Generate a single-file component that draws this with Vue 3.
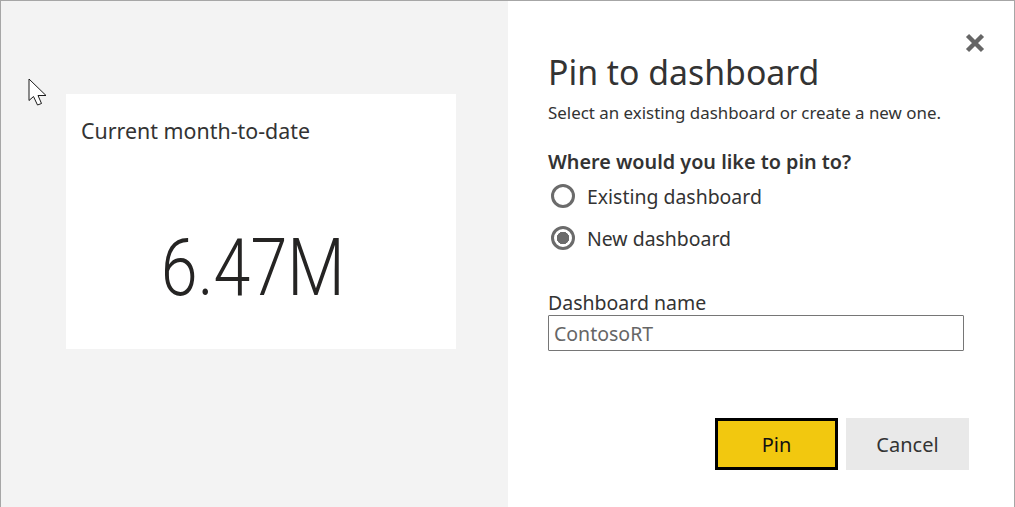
<script setup>
const title = 'Pin to dashboard'
</script>

<template>
  <div class="dialog">
    <section class="preview">
      <svg class="cursor" width="20" height="30" viewBox="0 0 20 30">
        <path d="M1 1 L1 22.5 L5.5 18.5 L9.5 27 L13.5 25.5 L10 17.5 L18 17.5 Z" fill="#fff" stroke="#1a1a1a" stroke-width="1" stroke-linejoin="miter" />
      </svg>
      <div class="card">
        <div class="card-title">Current month-to-date</div>
        <div class="card-value"><span class="value-text">6.47M</span></div>
      </div>
    </section>
    <section class="panel">
      <div class="close-row">
        <svg class="close" width="20" height="20" viewBox="0 0 20 20">
          <path d="M2.5 2.5 L17.5 17.5 M17.5 2.5 L2.5 17.5" stroke="#666" stroke-width="4.4" fill="none" />
        </svg>
      </div>
      <h1>{{ title }}</h1>
      <p class="sub">Select an existing dashboard or create a new one.</p>
      <h2>Where would you like to pin to?</h2>
      <div class="radio-row">
        <span class="radio"></span>
        <span>Existing dashboard</span>
      </div>
      <div class="radio-row second">
        <span class="radio on"></span>
        <span>New dashboard</span>
      </div>
      <label class="name-label">Dashboard name</label>
      <div class="input">ContosoRT</div>
      <div class="actions">
        <button class="btn primary">Pin</button>
        <button class="btn">Cancel</button>
      </div>
    </section>
  </div>
</template>

<style>
html, body { margin: 0; background: #fff; }
</style>

<style scoped>
.dialog {
  box-sizing: border-box;
  width: 1015px;
  height: 507px;
  display: flex;
  border-top: 1px solid #a6a6a6;
  border-left: 1px solid #a6a6a6;
  border-right: 1px solid #a6a6a6;
  font-family: "Noto Sans", "Open Sans", sans-serif;
  color: #333;
  overflow: hidden;
}
.preview {
  position: relative;
  box-sizing: border-box;
  width: 507px;
  background: #f3f3f3;
  padding: 93px 0 0 65px;
}
.cursor {
  position: absolute;
  left: 27px;
  top: 77px;
}
.card {
  box-sizing: border-box;
  width: 390px;
  height: 255px;
  background: #fff;
  padding: 22px 15px 0;
}
.card-title {
  font-size: 21.4px;
  line-height: 30px;
}
.card-value {
  margin-top: 72px;
  padding-right: 16px;
  text-align: center;
  font-family: Roboto, "Liberation Sans", sans-serif;
  font-weight: 300;
  font-size: 80px;
  line-height: 100px;
  color: #252423;
}
.value-text {
  display: inline-block;
  transform: scaleX(0.83);
}
.panel {
  flex: 1;
  box-sizing: border-box;
  padding: 0 44px 0 40px;
  display: flex;
  flex-direction: column;
  align-items: flex-start;
}
.close-row {
  align-self: stretch;
  height: 52px;
  display: flex;
  justify-content: flex-end;
  align-items: flex-end;
  margin-right: -15px;
  margin-bottom: 1px;
  box-sizing: border-box;
}
h1 {
  margin: -1px 0 0;
  font-size: 33.8px;
  font-weight: 400;
  line-height: 38px;
  color: #333;
}
.sub {
  margin: 10px 0 0;
  font-size: 16.9px;
  line-height: 24px;
}
h2 {
  margin: 23px 0 0;
  font-size: 19.8px;
  font-weight: 600;
  line-height: 28px;
}
.radio-row {
  display: flex;
  align-items: center;
  gap: 12px;
  margin-top: 4px;
  height: 32px;
  font-size: 19.45px;
  padding-left: 3px;
}
.radio-row.second { margin-top: 10px; }
.radio {
  box-sizing: border-box;
  width: 24px;
  height: 24px;
  border: 3px solid #6b6b6b;
  border-radius: 50%;
  background: #fff;
}
.radio.on {
  background: radial-gradient(circle, #6b6b6b 0 6px, #fff 6.5px);
}
.name-label {
  margin-top: 36px;
  font-size: 19.5px;
  line-height: 25px;
}
.input {
  box-sizing: border-box;
  width: 416px;
  height: 36px;
  border: 1px solid #767676;
  border-radius: 1px;
  padding: 1px 5px 0;
  font-size: 19.5px;
  line-height: 34px;
  color: #666;
}
.actions {
  align-self: stretch;
  margin-top: 67px;
  margin-right: 1px;
  display: flex;
  justify-content: flex-end;
  gap: 8px;
}
.btn {
  box-sizing: border-box;
  width: 123px;
  height: 52px;
  border: 0;
  background: #e9e9e9;
  font-family: inherit;
  font-size: 20px;
  color: #333;
  padding: 0;
}
.btn.primary {
  background: #f2c80f;
  border: 3px solid #000;
  color: #111;
}
</style>
